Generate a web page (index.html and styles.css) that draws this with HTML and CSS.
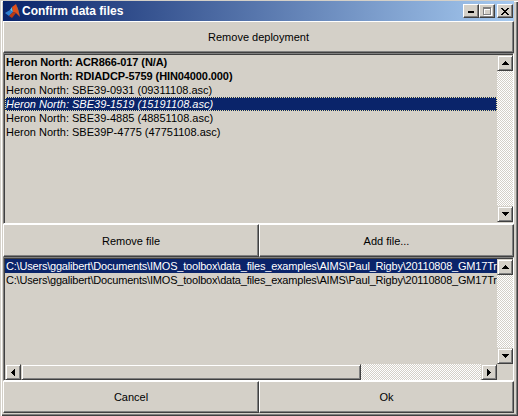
FILE: index.html
```html
<!DOCTYPE html>
<html>
<head>
<meta charset="utf-8">
<link rel="stylesheet" href="styles.css">
</head>
<body>
<div class="window">
  <div class="titlebar">
    <svg class="app-icon" width="16" height="16" viewBox="0 0 16 16">
      <polygon points="0,10 5,7 8,9 4,13" fill="#2f7fd0"/>
      <polygon points="5,7 7,4 8,9" fill="#5cc8ee"/>
      <polygon points="7,4 11,1 15,14 11,10 8,9" fill="#e0501c"/>
      <polygon points="11,1 13,6 15,14" fill="#f4a832"/>
      <polygon points="4,13 8,9 11,10 7,15" fill="#b83a14"/>
    </svg>
    <span class="title">Confirm data files</span>
    <div class="caption-buttons">
      <div class="cap">
        <svg width="6" height="2" viewBox="0 0 6 2"><rect width="6" height="2" fill="#000"/></svg>
      </div>
      <div class="cap">
        <svg width="9" height="9" viewBox="0 0 9 9" shape-rendering="crispEdges">
          <path d="M1 1h8v1H1zM1 3h1v6H1zM8 3h1v6H8zM1 8h8v1H1zM1 2h8v1H1z" fill="#fff"/>
          <path d="M0 0h8v2H0zM0 2h1v6H0zM7 2h1v6H7zM0 7h8v1H0z" fill="#808080"/>
        </svg>
      </div>
      <div class="cap cap-close">
        <svg width="8" height="7" viewBox="0 0 8 7" shape-rendering="crispEdges">
          <path d="M0 0h2v1h1v1h2V1h1V0h2v1H7v1H6v1H5v1h1v1h1v1h1v1H6V6H5V5H3v1H2v1H0V6h1V5h1V4h1V3H2V2H1V1H0z" fill="#000"/>
        </svg>
      </div>
    </div>
  </div>
  <div class="content">
    <button class="btn btn-top">Remove deployment</button>
    <div class="listbox list-deployments">
      <div class="items">
        <div class="item bold">Heron North: ACR866-017 (N/A)</div>
        <div class="item bold">Heron North: RDIADCP-5759 (HIN04000.000)</div>
        <div class="item">Heron North: SBE39-0931 (09311108.asc)</div>
        <div class="item selected focused italic">Heron North: SBE39-1519 (15191108.asc)</div>
        <div class="item">Heron North: SBE39-4885 (48851108.asc)</div>
        <div class="item">Heron North: SBE39P-4775 (47751108.asc)</div>
      </div>
      <div class="vscroll">
        <div class="arrow"><svg width="7" height="4" viewBox="0 0 7 4" shape-rendering="crispEdges"><path d="M3 0h1v1h1v1h1v1h1v1H0V3h1V2h1V1h1z"/></svg></div>
        <div class="track"></div>
        <div class="arrow"><svg width="7" height="4" viewBox="0 0 7 4" shape-rendering="crispEdges"><path d="M0 0h7v1H6v1H5v1H4v1H3V3H2V2H1V1H0z"/></svg></div>
      </div>
    </div>
    <div class="btn-row btn-row-mid">
      <button class="btn">Remove file</button>
      <button class="btn">Add file...</button>
    </div>
    <div class="listbox list-files">
      <div class="items">
        <div class="item selected">C:\Users\ggalibert\Documents\IMOS_toolbox\data_files_examples\AIMS\Paul_Rigby\20110808_GM17Tr</div>
        <div class="item">C:\Users\ggalibert\Documents\IMOS_toolbox\data_files_examples\AIMS\Paul_Rigby\20110808_GM17Tr</div>
      </div>
      <div class="vscroll">
        <div class="arrow"><svg width="7" height="4" viewBox="0 0 7 4" shape-rendering="crispEdges"><path d="M3 0h1v1h1v1h1v1h1v1H0V3h1V2h1V1h1z"/></svg></div>
        <div class="track"></div>
        <div class="arrow"><svg width="7" height="4" viewBox="0 0 7 4" shape-rendering="crispEdges"><path d="M0 0h7v1H6v1H5v1H4v1H3V3H2V2H1V1H0z"/></svg></div>
      </div>
      <div class="hscroll">
        <div class="arrow"><svg width="4" height="7" viewBox="0 0 4 7" shape-rendering="crispEdges"><path d="M3 0h1v7H3V6H2V5H1V4H0V3h1V2h1V1h1z"/></svg></div>
        <div class="thumb"></div>
        <div class="track"></div>
        <div class="arrow"><svg width="4" height="7" viewBox="0 0 4 7" shape-rendering="crispEdges"><path d="M0 0h1v1h1v1h1v1h1v1H3v1H2v1H1v1H0z"/></svg></div>
      </div>
      <div class="corner"></div>
    </div>
    <div class="btn-row btn-row-bottom">
      <button class="btn">Cancel</button>
      <button class="btn">Ok</button>
    </div>
  </div>
</div>
</body>
</html>
```

FILE: styles.css
```css
* {
  box-sizing: border-box;
}

html,
body {
  margin: 0;
  padding: 0;
}

body {
  width: 518px;
  height: 416px;
  overflow: hidden;
  background: #d4d0c8;
  font-family: "Liberation Sans", Arial, sans-serif;
  font-size: 11px;
  color: #000;
}

.window {
  width: 518px;
  height: 416px;
  padding: 1px 4px 3px 3px;
  display: flex;
  flex-direction: column;
  background: #d4d0c8;
  box-shadow: inset 1px 1px #d4d0c8, inset 2px 2px #ffffff, inset -1px -1px #404040, inset -2px -2px #808080;
}

.titlebar {
  height: 20px;
  flex: none;
  display: flex;
  align-items: center;
  padding-left: 2px;
  padding-right: 1px;
  background: linear-gradient(to right, #0a246a, #a6caf0);
}

.app-icon {
  display: block;
  flex: none;
}

.title {
  margin-left: 1px;
  color: #fff;
  font-weight: bold;
  font-size: 12px;
  line-height: 20px;
  white-space: nowrap;
}

.caption-buttons {
  margin-left: auto;
  display: flex;
}

.cap {
  width: 16px;
  height: 14px;
  display: flex;
  align-items: center;
  justify-content: center;
  background: #d4d0c8;
  border: 1px solid;
  border-color: #fff #404040 #404040 #fff;
  box-shadow: inset -1px -1px #808080;
  padding-top: 1px;
}

.cap svg {
  display: block;
}

.cap-close {
  margin-left: 2px;
}

.content {
  flex: 1;
  display: flex;
  flex-direction: column;
  min-height: 0;
}

.btn {
  margin: 0;
  padding: 0;
  font-family: inherit;
  font-size: 11px;
  color: #000;
  background: #d4d0c8;
  border: 1px solid;
  border-color: #fff #404040 #404040 #fff;
  box-shadow: inset -1px -1px #808080;
  border-radius: 0;
  outline: none;
}

.btn-top {
  height: 32px;
  flex: none;
  width: 100%;
}

.btn-row {
  flex: none;
  display: grid;
  grid-template-columns: 256px 1fr;
}

.btn-row-mid {
  height: 33px;
}

.btn-row-bottom {
  height: 32px;
}

.listbox {
  flex: none;
  display: grid;
  grid-template-columns: 1fr 16px;
  background: #d4d0c8;
  border: 1px solid;
  border-color: #808080 #fff #fff #808080;
  box-shadow: inset 1px 1px #404040;
}

.list-deployments {
  height: 171px;
  padding: 1px 0 1px 1px;
}

.list-deployments .bold {
  letter-spacing: -0.1px;
}

.list-files {
  height: 124px;
  padding: 1px 0 0 1px;
  grid-template-rows: 1fr 16px;
}

.list-files .item {
  letter-spacing: -0.2px;
}

.items {
  overflow: hidden;
  min-width: 0;
}

.item {
  height: 14px;
  line-height: 14px;
  padding-left: 1px;
  white-space: nowrap;
  overflow: hidden;
}

.bold {
  font-weight: bold;
}

.italic {
  font-style: italic;
}

.selected {
  background: #0a246a;
  color: #fff;
}

.focused {
  outline: 1px dotted #e6dca0;
  outline-offset: -1px;
}

.vscroll {
  display: flex;
  flex-direction: column;
  min-height: 0;
}

.hscroll {
  display: grid;
  grid-template-columns: 16px 340px 1fr 16px;
  min-width: 0;
}

.arrow,
.thumb {
  width: 16px;
  height: 16px;
  flex: none;
  display: flex;
  align-items: center;
  justify-content: center;
  background: #d4d0c8;
  border: 1px solid;
  border-color: #d4d0c8 #404040 #404040 #d4d0c8;
  box-shadow: inset 1px 1px #fff, inset -1px -1px #808080;
}

.thumb {
  width: auto;
}

.arrow svg {
  display: block;
  fill: #000;
}

.track {
  flex: 1;
  background: repeating-conic-gradient(#ffffff 0 25%, #d4d0c8 0 50%) 0 0 / 2px 2px;
}

.corner {
  background: #d4d0c8;
}
```
